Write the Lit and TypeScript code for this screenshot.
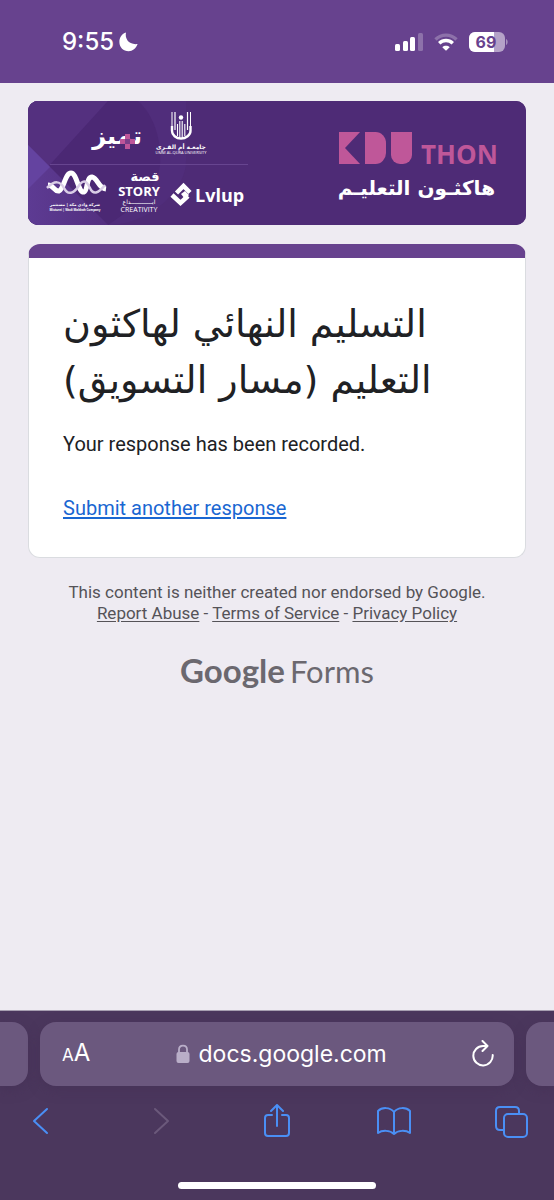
import { LitElement, html, css, svg } from "lit";
import { customElement } from "lit/decorators.js";

@customElement("status-bar")
class StatusBar extends LitElement {
  static styles = css`
    :host {
      display: flex;
      align-items: center;
      justify-content: space-between;
      box-sizing: border-box;
      height: 83px;
      padding: 0 46px 0 62px;
      background: #67428e;
      color: #fff;
      font-family: Inter, sans-serif;
    }
    .side { display: flex; align-items: center; gap: 5px; }
    .time { font-size: 24px; line-height: 28px; font-weight: 500; }
    .icons { gap: 11px; }
    svg { display: block; }
    .level { font: 700 16px Inter, sans-serif; fill: #67428e; }
  `;
  render() {
    return html`
      <div class="side">
        <span class="time">9:55</span>
        <svg width="19" height="20" viewBox="0 0 19 20" fill="#fff" aria-hidden="true">
          <path d="M7 0.6C5.6 6.6 9.8 13.2 18.6 12.1C17 16.6 13.6 19.3 9.6 19.3C4.4 19.3 0.4 15.3 0.4 10C0.4 5.600 3 1.800 7 0.600Z" />
        </svg>
      </div>
      <div class="side icons">
        <svg width="28" height="18" viewBox="0 0 28 18" fill="#fff" aria-hidden="true">
          <rect x="0" y="11" width="5" height="7" rx="1.500" />
          <rect x="8" y="8" width="5" height="10" rx="1.500" />
          <rect x="15" y="4" width="5" height="14" rx="1.500" />
          <rect x="23" y="0" width="5" height="18" rx="1.500" opacity="0.25" />
        </svg>
        <svg width="24" height="18" viewBox="0 0 24 18" fill="none" stroke="#fff" stroke-width="3.400" aria-hidden="true">
          <path d="M1.500 6.500C7.500 0.700 16.500 0.700 22.500 6.500" opacity="0.250" />
          <path d="M5.200 10.300C9.200 6.500 14.800 6.500 18.800 10.300" />
          <path d="M12 17.800L8.300 14.200C10.400 12.300 13.600 12.300 15.700 14.200Z" fill="#fff" stroke="none" />
        </svg>
        <svg width="39" height="20" viewBox="0 0 39 20" role="img" aria-label="Battery 69 percent">
          <defs><clipPath id="body"><rect width="36" height="20" rx="6" /></clipPath></defs>
          <g clip-path="url(#body)">
            <rect width="36" height="20" fill="#b5a2c8" />
            <rect width="25" height="20" fill="#fff" />
          </g>
          <path d="M37 7C39.200 8 39.200 12 37 13Z" fill="#a791be" />
          <text class="level" x="17" y="16" text-anchor="middle">69</text>
        </svg>
      </div>
    `;
  }
}

@customElement("form-banner")
class FormBanner extends LitElement {
  static styles = css`
    :host { display: block; border-radius: 10px; overflow: hidden; background: #4e2b76; }
    svg { display: block; width: 100%; height: auto; }
    .ar { font-family: "DejaVu Sans", sans-serif; font-weight: 700; direction: rtl; }
    .lat { font-family: "Open Sans", "Noto Sans", sans-serif; font-weight: 700; }
    .light { font-weight: 400; }
  `;
  render() {
    return html`
      <svg viewBox="0 0 498 124" role="img" aria-label="Eduthon banner">
        <defs>
          <linearGradient id="glow" x1="0" y1="0" x2="1" y2="0">
            <stop offset="0" stop-color="#5d3b93" />
            <stop offset="1" stop-color="#532f7f" />
          </linearGradient>
        </defs>
        <rect width="498" height="124" fill="#4e2b76" />
        <path d="M0 0H158V60C158 90 120 124 80 124H0Z" fill="#502d7b" />
        <path d="M0 0H80L20 66L0 45Z" fill="#54307f" />
        <path d="M80 0H110C126 14 134 40 132 64C130 86 110 104 80 124L20 66Z" fill="#4b2874" />
        <path d="M0 44L80 124H0Z" fill="url(#glow)" />
        <path d="M0 44L22 66L0 88Z" fill="#6443a0" />
        <rect x="22" y="63" width="198" height="1" fill="#674590" />

        <g fill="#fff">
          <text class="ar" x="114" y="43" font-size="24" text-anchor="start">تميز</text>
          <g fill="#bd5599">
            <rect x="97" y="33" width="5" height="5" />
            <rect x="92" y="38" width="5" height="5" />
            <rect x="102" y="38" width="5" height="5" />
            <rect x="97" y="43" width="5" height="5" />
            <rect x="97" y="38" width="5" height="5" fill="#7b3f8a" />
          </g>

          <g fill="none" stroke="#fff">
            <path d="M147 11V29M159.500 11V29" stroke-width="1.200" />
            <path d="M144 11V30C144 34 148 37.500 153 37.500C158 37.500 162.500 34 162.500 30V11" stroke-width="1" />
            <path d="M144 25V30C144 34 148 37.500 153 37.500C158 37.500 162.500 34 162.500 30V25" stroke-width="2.400" />
            <path d="M149.500 23V35M151.800 20V36M154.200 20V36M156.800 23V35" stroke-width="1.100" />
          </g>
          <circle cx="153" cy="16.500" r="2.200" />
          <text class="ar" x="153" y="48" font-size="6" text-anchor="middle">جامعـة أم القـرى</text>
          <text class="lat light" x="153" y="53" font-size="4" text-anchor="middle">UMM AL-QURA UNIVERSITY</text>

          <path d="M20 84C26 84 26 91 31 90C36 88 37 72 43 72C49 72 50 92 56 91C60 90 58 76 64 76C70 77 70 87 78 88" fill="none" stroke="#fff" stroke-width="5" />
          <path d="M19 87C27 79 32 80 36 87C40 95 46 92 50 86C55 78 58 79 62 87C65 94 70 93 77 84" fill="none" stroke="#d9cde6" stroke-width="2.500" />
          <text class="ar" x="47" y="105" font-size="4" text-anchor="middle">شركة وادي مكة | مستثمر</text>
          <text class="lat" x="47" y="110" font-size="3" text-anchor="middle">Misturei | Wadi Makkah Company</text>

          <text class="ar" x="117" y="80" font-size="13" text-anchor="middle">قصة</text>
          <text class="lat" x="111" y="95" font-size="13" text-anchor="middle">STORY</text>
          <text class="ar light" x="111" y="103" font-size="6" text-anchor="middle">ابــــــــــــداع</text>
          <text class="lat light" x="111" y="111" font-size="7" text-anchor="middle">CREATIVITY</text>

          <g fill="none" stroke="#fff" stroke-width="4.500">
            <path d="M148.500 92L155.500 85L162 91.500" />
            <path d="M144 94L152.500 102L160 95" />
          </g>
          <path d="M153 93L157 90L161 94L157 98Z" />
          <text class="lat" x="167" y="101" font-size="18">Lvlup</text>
        </g>

        <g fill="#bf5799">
          <rect x="311" y="31" width="21" height="32" />
          <path d="M333 30L317 47L333 64Z" fill="#4e2b76" />
          <rect x="337" y="31" width="10" height="32" />
          <rect x="337" y="31" width="21" height="32" rx="11" />
          <rect x="363" y="31" width="21" height="20" />
          <rect x="363" y="31" width="21" height="32" rx="9" />
          <text class="lat" x="393" y="63" font-size="26">THON</text>
        </g>
        <text class="ar" x="467" y="94" font-size="20" fill="#fff">هاكثـون التعليـم</text>
      </svg>
    `;
  }
}

@customElement("response-card")
class ResponseCard extends LitElement {
  static styles = css`
    :host {
      display: block;
      box-sizing: border-box;
      border: 1px solid #dadce0;
      border-top: 14px solid #67428e;
      border-radius: 12px;
      background: #fff;
      padding: 38px 34px 35px;
      font-family: Roboto, sans-serif;
      color: #202124;
    }
    h1 {
      margin: 0;
      font: 400 38px/56px "DejaVu Sans", sans-serif;
      text-align: left;
    }
    p { margin: 22px 0 36px; font-size: 20px; line-height: 28px; }
    a { font-size: 20px; line-height: 28px; color: #1a67d2; text-underline-offset: 2px; }
  `;
  render() {
    return html`
      <h1 dir="rtl" lang="ar">التسليم النهائي لهاكثون التعليم (مسار التسويق)</h1>
      <p>Your response has been recorded.</p>
      <a href="#another">Submit another response</a>
    `;
  }
}

@customElement("form-footer")
class FormFooter extends LitElement {
  static styles = css`
    :host { display: block; text-align: center; font: 400 17px/21px Roboto, sans-serif; color: #555358; }
    a { color: inherit; text-underline-offset: 2px; }
    .brand { display: flex; justify-content: center; align-items: baseline; gap: 5px; margin-top: 26px; color: #6b686f; line-height: 40px; }
    .google { font-family: Lato, sans-serif; font-size: 33px; font-weight: 700; }
    .forms { font-family: Lato, sans-serif; font-size: 31px; font-weight: 400; }
  `;
  render() {
    return html`
      <div>This content is neither created nor endorsed by Google.</div>
      <div><a href="#abuse">Report Abuse</a> - <a href="#terms">Terms of Service</a> - <a href="#privacy">Privacy Policy</a></div>
      <div class="brand"><span class="google">Google</span><span class="forms">Forms</span></div>
    `;
  }
}

const toolbarIcons = [
  { label: "Back", tone: "active", shape: svg`<path d="M21 5L8 17L21 29" />` },
  { label: "Forward", tone: "muted", shape: svg`<path d="M12 5L25 17L12 29" />` },
  { label: "Share", tone: "active", shape: svg`<path d="M12 11H8Q5 11 5 14V29Q5 32 8 32H26Q29 32 29 29V14Q29 11 26 11H22M17 22V1M11 7L17 1L23 7" />` },
  { label: "Bookmarks", tone: "active", shape: svg`<path d="M17 8C13 3 5 3 1 7V29C5 26 13 26 17 30C21 26 29 26 33 29V7C29 3 21 3 17 8V30" />` },
  { label: "Tabs", tone: "active", shape: svg`<rect x="10" y="10" width="23" height="23" rx="4" /><path d="M10 26H6Q2 26 2 22V7Q2 3 6 3H21Q25 3 25 7V10" />` },
];

@customElement("browser-bar")
class BrowserBar extends LitElement {
  static styles = css`
    :host { display: block; background: #4b375d; border-top: 1px solid #a79fb1; overflow: hidden; }
    .tabs { display: grid; grid-template-columns: 28px 1fr 28px; gap: 12px; padding-top: 11px; }
    .tab { height: 64px; background: #6b587e; box-shadow: 0 4px 12px #44305599; }
    .left { border-radius: 0 16px 16px 0; }
    .right { border-radius: 16px 0 0 16px; }
    .address {
      display: flex;
      align-items: center;
      justify-content: space-between;
      box-sizing: border-box;
      border-radius: 16px;
      padding: 0 20px 0 22px;
      color: #fff;
      font-family: Inter, sans-serif;
    }
    button { display: flex; align-items: center; border: 0; margin: 0; padding: 0; background: none; color: inherit; font: inherit; }
    .size { align-items: baseline; font-size: 24px; line-height: 28px; }
    .small { font-size: 17px; }
    .url { gap: 9px; font-size: 23px; line-height: 32px; }
    svg { display: block; fill: none; stroke: currentColor; stroke-linecap: round; stroke-linejoin: round; }
    .toolbar { display: flex; justify-content: space-between; padding: 18px 26px 0; }
    .toolbar svg { stroke-width: 2; }
    .active { color: #4a8ff5; }
    .muted { color: #6b597b; }
    .home { width: 198px; height: 7px; border-radius: 4px; background: #fff; margin: 44px auto 11px; }
  `;
  render() {
    return html`
      <div class="tabs">
        <div class="tab left"></div>
        <div class="tab address">
          <button class="size" aria-label="Page settings"><span class="small">A</span><span>A</span></button>
          <button class="url">
            <svg width="14" height="20" viewBox="0 0 14 20" aria-hidden="true">
              <rect x="0.500" y="8" width="13" height="11" rx="2" fill="#b9aec8" stroke="none" />
              <path d="M3 9V5.500C3 0.200 11 0.200 11 5.500V9" stroke="#b9aec8" stroke-width="1.800" />
            </svg>
            <span>docs.google.com</span>
          </button>
          <button aria-label="Reload">
            <svg width="22" height="28" viewBox="0 0 22 28" stroke-width="2" aria-hidden="true">
              <path d="M15 6H11A9.700 9.700 0 1 0 20.700 15M10.500 1L15.500 6L10.500 11" />
            </svg>
          </button>
        </div>
        <div class="tab right"></div>
      </div>
      <div class="toolbar">
        ${toolbarIcons.map(
          (i) => html`<button class=${i.tone} aria-label=${i.label}>
            <svg width="34" height="34" viewBox="0 0 34 34">${i.shape}</svg>
          </button>`
        )}
      </div>
      <div class="home"></div>
    `;
  }
}

@customElement("app-root")
class AppRoot extends LitElement {
  static styles = css`
    :host { display: flex; flex-direction: column; min-height: 100vh; background: #eeebf2; }
    main { flex: 1; display: flex; flex-direction: column; gap: 19px; padding: 18px 28px; }
    form-footer { margin-top: 5px; }
  `;
  render() {
    return html`
      <status-bar></status-bar>
      <main>
        <form-banner></form-banner>
        <response-card></response-card>
        <form-footer></form-footer>
      </main>
      <browser-bar></browser-bar>
    `;
  }
}
